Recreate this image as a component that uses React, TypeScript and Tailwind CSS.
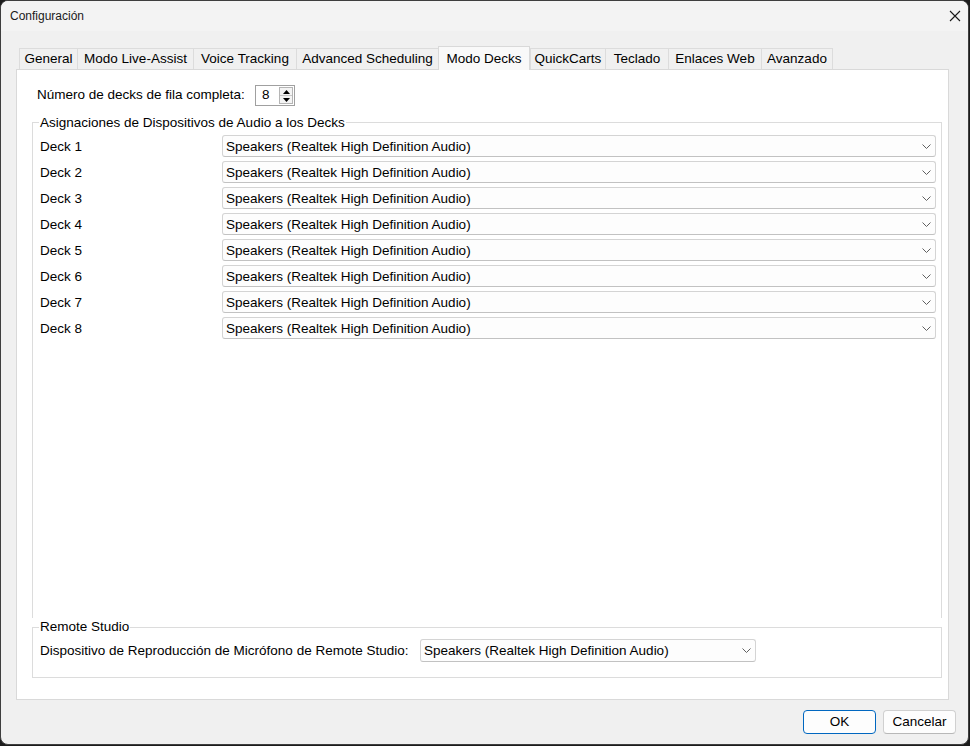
import React from 'react';

const tabs = [
  { label: 'General', w: 'w-[58px]' },
  { label: 'Modo Live-Assist', w: 'w-[116px]' },
  { label: 'Voice Tracking', w: 'w-[103px]' },
  { label: 'Advanced Scheduling', w: 'w-[142px]' },
  { label: 'Modo Decks', w: 'w-[92px]', active: true },
  { label: 'QuickCarts', w: 'w-[75px]' },
  { label: 'Teclado', w: 'w-[63px]' },
  { label: 'Enlaces Web', w: 'w-[93px]' },
  { label: 'Avanzado', w: 'w-[72px]', last: true },
];

const decks = [1, 2, 3, 4, 5, 6, 7, 8];
const device = 'Speakers (Realtek High Definition Audio)';

function Chevron() {
  return (
    <svg width="9" height="5" viewBox="0 0 9 5" className="shrink-0">
      <polyline points="0.5,0.5 4.5,4.5 8.5,0.5" fill="none" stroke="#606060" strokeWidth="1" />
    </svg>
  );
}

function DeviceSelect({ className }: { className: string }) {
  return (
    <div
      className={`flex items-center justify-between pl-[3px] pr-[4px] bg-[#fdfdfd] border border-[#d4d4d4] border-b-[#c2c2c2] rounded-[3px] ${className}`}
    >
      <span className="leading-none pt-px">{device}</span>
      <Chevron />
    </div>
  );
}

export default function App() {
  return (
    <div className="w-[970px] h-[746px] bg-[#1c1c1c] font-['Liberation_Sans',Arial,sans-serif] text-[13.5px] text-black">
      <div className="w-[969px] h-[745px] rounded-[8px] border border-[#3e3e3e] bg-[#f0f0f0] overflow-hidden flex flex-col">
        {/* Title bar */}
        <div className="h-[30px] bg-[#f3f3f3] flex items-center justify-between pl-[9px] pr-[7px] shrink-0">
          <span className="text-[12px] text-[#1a1a1a]">Configuración</span>
          <svg width="12" height="12" viewBox="0 0 12 12">
            <path d="M1 1 L11 11 M11 1 L1 11" stroke="#1a1a1a" strokeWidth="1.1" />
          </svg>
        </div>

        {/* Tabs */}
        <div className="pt-[15px] ml-[15px] w-[933px]">
          <div className="flex items-end pl-[3px] h-[23px]">
            {tabs.map((t) =>
              t.active ? (
                <div
                  key={t.label}
                  className={`${t.w} h-[24px] -mb-px relative z-10 bg-[#f9f9f9] border border-b-0 border-[#d9d9d9] flex justify-center pt-[2px]`}
                >
                  {t.label}
                </div>
              ) : (
                <div
                  key={t.label}
                  className={`${t.w} h-[21px] bg-[#f0f0f0] border-t border-l ${t.last ? 'border-r' : ''} border-[#dcdcdc] flex items-center justify-center`}
                >
                  {t.label}
                </div>
              )
            )}
          </div>

          {/* Panel */}
          <div className="h-[631px] bg-white border border-[#d9d9d9] flex flex-col">
            <div className="flex items-center pl-[20px] pt-[15px] h-[36px]">
              <span className="w-[218px] shrink-0">Número de decks de fila completa:</span>
              <div className="w-[40px] h-[21px] border border-[#a0a0a0] flex items-center justify-between pl-[6px] pr-px">
                <span>8</span>
                <div className="flex flex-col w-[14px] h-[17px] border border-[#b5b5b5] bg-[#f4f4f4]">
                  <div className="flex-1 flex items-center justify-center border-b border-[#c8c8c8]">
                    <svg width="7" height="4" viewBox="0 0 7 4">
                      <polygon points="3.5,0 7,4 0,4" fill="#000" />
                    </svg>
                  </div>
                  <div className="flex-1 flex items-center justify-center">
                    <svg width="7" height="4" viewBox="0 0 7 4">
                      <polygon points="0,0 7,0 3.5,4" fill="#000" />
                    </svg>
                  </div>
                </div>
              </div>
            </div>

            {/* Device assignment group */}
            <div className="relative mt-[16px] ml-[15px] w-[910px] h-[496px] border-t border-l border-r border-[#dcdcdc] pl-[7px] pr-[5px] pt-[12px]">
              <span className="absolute -top-[8px] left-[6px] bg-white px-[1px] leading-[16px]">
                Asignaciones de Dispositivos de Audio a los Decks
              </span>
              <div className="flex flex-col gap-[4px]">
                {decks.map((d) => (
                  <div key={d} className="flex items-center h-[22px]">
                    <span className="w-[182px] shrink-0 pt-[2px]">Deck {d}</span>
                    <DeviceSelect className="flex-1 h-[22px]" />
                  </div>
                ))}
              </div>
            </div>

            {/* Remote Studio group */}
            <div className="relative mt-[9px] ml-[15px] w-[910px] h-[51px] border border-[#dcdcdc] pl-[7px] pt-[11px]">
              <span className="absolute -top-[9px] left-[6px] bg-white px-[1px] leading-[16px]">Remote Studio</span>
              <div className="flex items-center h-[23px]">
                <span className="w-[380px] shrink-0 pt-px">Dispositivo de Reproducción de Micrófono de Remote Studio:</span>
                <DeviceSelect className="w-[336px] h-[23px]" />
              </div>
            </div>
          </div>
        </div>

        {/* Buttons */}
        <div className="flex justify-end gap-[7px] mt-[10px] pr-[12px]">
          <button className="w-[73px] h-[24px] rounded-[4px] border border-[#0067c0] bg-[#fdfdfd]">
            OK
          </button>
          <button className="w-[73px] h-[24px] rounded-[4px] border border-[#d0d0d0] border-b-[#b8b8b8] bg-[#fdfdfd]">
            Cancelar
          </button>
        </div>
      </div>
    </div>
  );
}
